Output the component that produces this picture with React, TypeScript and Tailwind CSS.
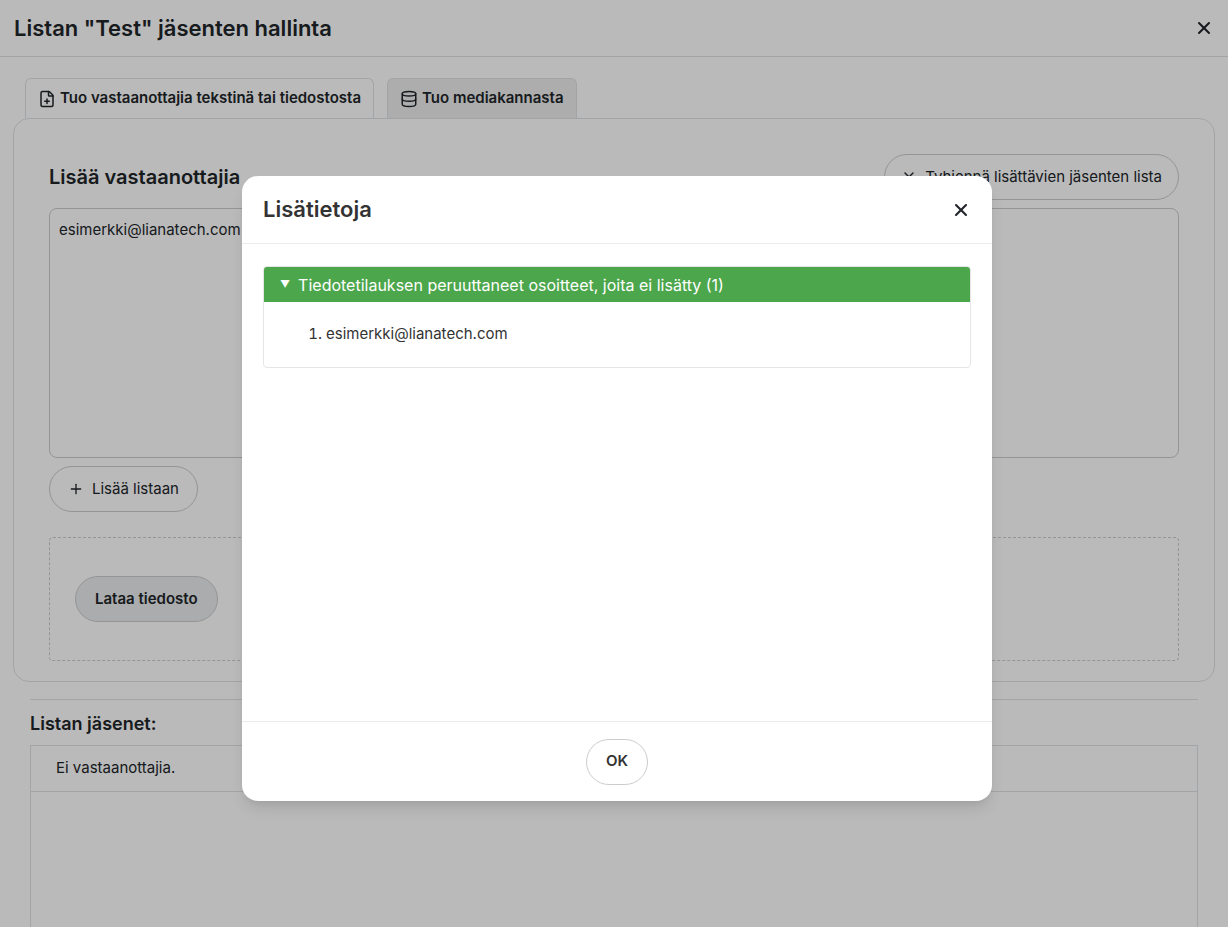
import { FilePlus, Database, X, Plus } from "lucide-react";

const font = { fontFamily: "Inter, 'Noto Sans', sans-serif" };

export default function App() {
  return (
    <div className="relative h-[927px] w-[1228px] overflow-hidden bg-white text-[#212529]" style={font}>
      {/* page header */}
      <div className="flex h-[57px] items-center justify-between border-b border-[#dee2e6] px-[14px]">
        <h1 className="text-[22px] font-semibold text-[#212529]">Listan "Test" jäsenten hallinta</h1>
        <X className="h-5 w-5" strokeWidth={2.5} />
      </div>

      {/* tabs */}
      <div className="px-[13px] pt-[21px]">
        <div className="flex gap-[13px] pl-[12px]">
          <div className="flex h-[40px] items-center gap-1 rounded-t-md border border-b-0 border-[#dee2e6] bg-white px-3 text-[15px] font-semibold">
            <FilePlus className="h-[18px] w-[18px]" />
            Tuo vastaanottajia tekstinä tai tiedostosta
          </div>
          <div className="flex h-[40px] items-center gap-1 rounded-t-md border border-b-0 border-[#dee2e6] bg-[#eeeeee] px-3 text-[15px] font-semibold">
            <Database className="h-[18px] w-[18px]" />
            Tuo mediakannasta
          </div>
        </div>
        <div className="rounded-2xl border border-[#dee2e6] px-[35px] pb-[20px] pt-[35px]">
          <div className="flex items-center justify-between">
            <h2 className="text-[20px] font-semibold">Lisää vastaanottajia</h2>
            <button className="flex h-[46px] items-center gap-2 rounded-full border border-[#ccc] px-4 text-[15px]">
              <X className="h-4 w-4" />
              Tyhjennä lisättävien jäsenten lista
            </button>
          </div>
          <div className="mt-[8px] h-[250px] rounded-lg border border-[#ccc] px-[9px] py-[10px] text-[15px]">
            esimerkki@lianatech.com
          </div>
          <button className="mt-[8px] flex h-[46px] items-center gap-2 rounded-full border border-[#ccc] px-[18px] text-[15px]">
            <Plus className="h-4 w-4" />
            Lisää listaan
          </button>
          <div className="mt-[25px] flex h-[124px] items-center rounded border border-dashed border-[#ccc] px-[25px]">
            <button className="h-[46px] rounded-full border border-[#ccc] bg-[#e9ecef] px-[19px] text-[15px] font-semibold">
              Lataa tiedosto
            </button>
          </div>
        </div>
      </div>
      <div className="mx-[30px] mt-[17px] border-t border-[#dee2e6] pt-[10px]">
        <h3 className="text-[18px] font-semibold">Listan jäsenet:</h3>
        <div className="mt-[8px] h-[200px] border border-[#dee2e6]">
          <div className="flex h-[46px] items-center border-b border-[#dee2e6] px-[25px] text-[15px]">Ei vastaanottajia.</div>
        </div>
      </div>

      {/* overlay */}
      <div className="absolute inset-0 bg-black/[0.27]" />

      {/* modal */}
      <div className="absolute left-[242px] top-[176px] flex h-[625px] w-[750px] flex-col rounded-2xl bg-white shadow-lg">
        <div className="flex h-[68px] items-center justify-between border-b border-[#e9ecef] px-[21px]">
          <h2 className="text-[22px] font-semibold text-[#333]">Lisätietoja</h2>
          <X className="h-5 w-5" strokeWidth={2.5} />
        </div>
        <div className="flex-1 px-[21px] pt-[22px]">
          <div className="overflow-hidden rounded border border-[#e5e5e5]">
            <div className="flex h-[35px] items-center gap-2 bg-[#4ca64c] px-[16px] text-[16px] text-white">
              <span className="text-[10px]">▼</span>
              Tiedotetilauksen peruuttaneet osoitteet, joita ei lisätty (1)
            </div>
            <ol className="list-decimal py-[21px] pl-[62px] text-[15px] text-[#333]">
              <li>esimerkki@lianatech.com</li>
            </ol>
          </div>
        </div>
        <div className="flex h-[80px] items-center justify-center border-t border-[#e9ecef]">
          <button className="h-[46px] rounded-full border border-[#ccc] px-[19px] text-[15px] font-semibold text-[#333]">OK</button>
        </div>
      </div>
    </div>
  );
}
